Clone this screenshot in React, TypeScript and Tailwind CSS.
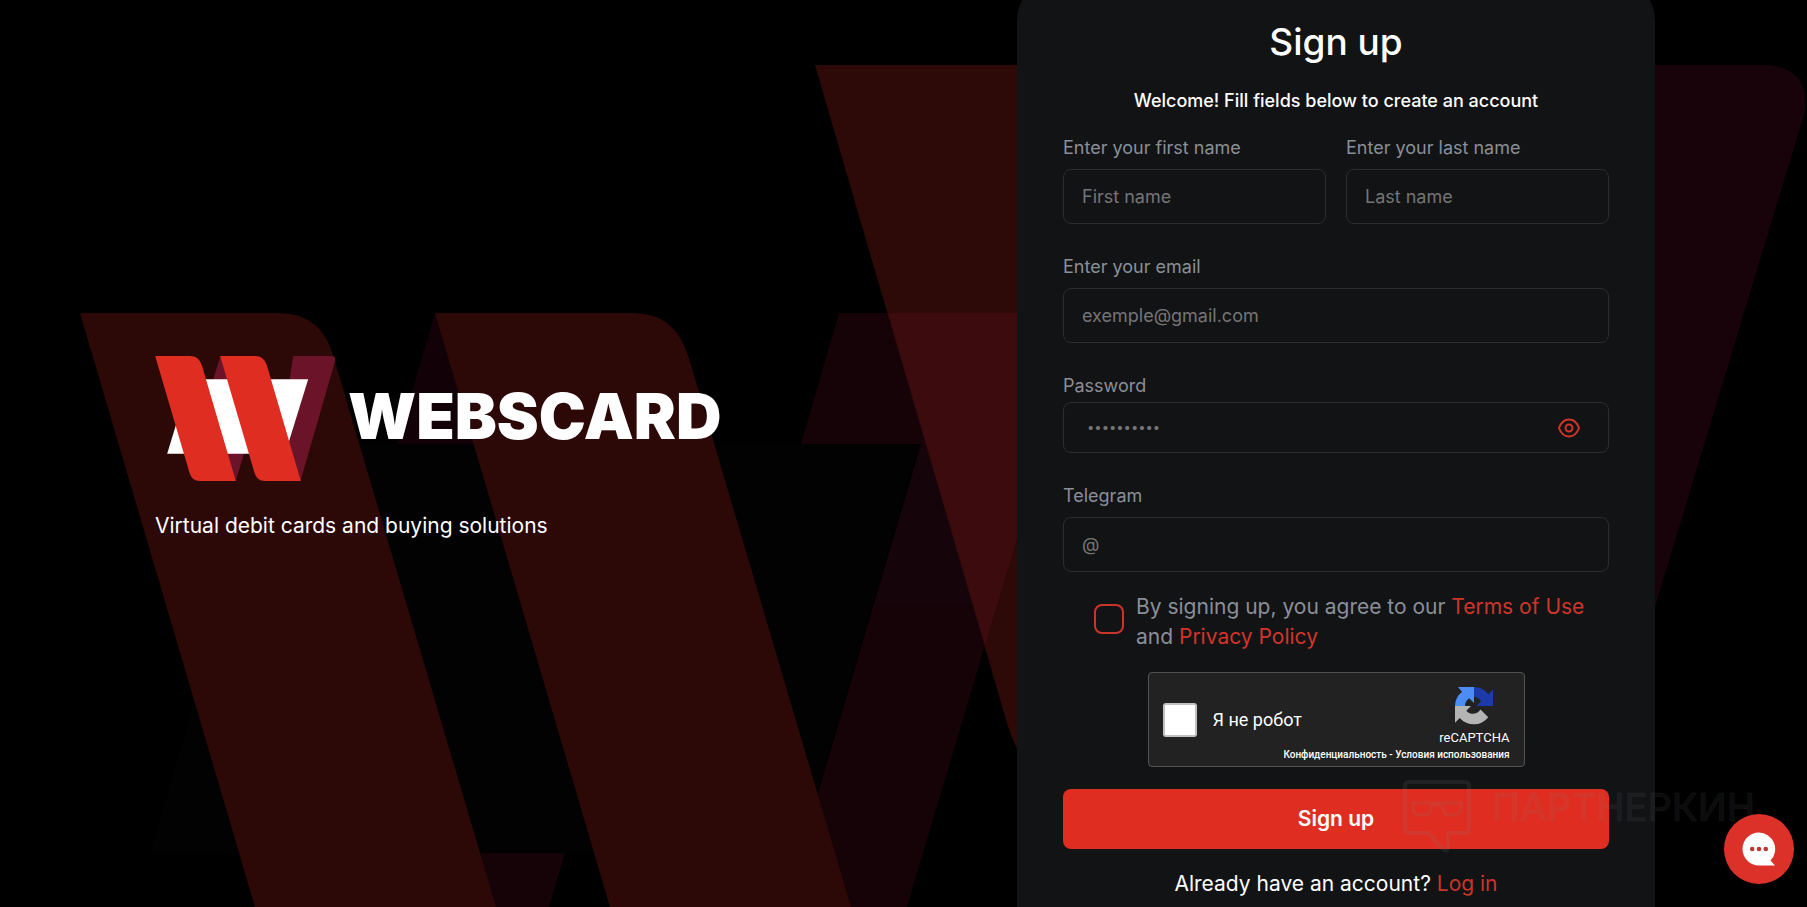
import type { ReactNode } from "react";

const font = "font-['Inter','Noto_Sans',sans-serif]";

function Backdrop() {
  return (
    <svg
      aria-hidden="true"
      className="absolute inset-0 h-full w-full"
      viewBox="0 0 1807 907"
      preserveAspectRatio="xMidYMid slice"
    >
      <path d="M435 313L397 444H480V313Z" fill="#120207" />
      <path d="M839 313H1017V444H801Z" fill="#150308" />
      <path d="M271 444H919L800 853H150Z" fill="#020202" />
      <path d="M470 853H565L549 907H470Z" fill="#150308" />
      <path d="M921 444H1045L907 907H800V853L819 790Z" fill="#150308" />
      <path d="M920 448H1045L997 605H874Z" fill="#15050a" />
      <path d="M1450 65H1763C1795 65 1813 85 1803 118L1655 607L1450 1200Z" fill="#170309" />
      <path d="M80 313H276C307 313 324 326 333 355L496 907H255Z" fill="#2c0907" />
      <path d="M435 313H631C664 313 681 328 691 365L851 907H610Z" fill="#2c0907" />
      <path d="M815 65H1100V800C1040 790 1020 765 1007 723Z" fill="#2d0a08" />
      <path d="M888 313H1050V430L985 645Z" fill="#3c0b0e" />
    </svg>
  );
}

function LogoMark() {
  return (
    <svg aria-hidden="true" className="h-[125px] w-[181px] shrink-0" viewBox="48 48 542 375">
      <path d="M244 48L222 118L265 342L290 422L330 290Z" fill="#6b1328" />
      <path d="M265 341H312L288 423Z" fill="#6b1328" />
      <path d="M462 48H576Q592 48 587 66L484 423L430 260Z" fill="#6b1328" />
      <path d="M152 118H507L438 341H84Z" fill="#fff" />
      <path d="M48 48H153Q179 48 188 76L290 423H182Q158 423 151 398Z" fill="#df2e21" />
      <path d="M243 48H348Q374 48 383 76L485 423H377Q353 423 346 398Z" fill="#df2e21" />
    </svg>
  );
}

function RecaptchaLogo() {
  return (
    <svg aria-hidden="true" className="h-[38px] w-[38px]" viewBox="0 0 64 64">
      <path d="M64 32V4l-8 8A31 31 0 0 0 32 0v17a15 15 0 0 1 12 7l-8 8z" fill="#1c3aa9" />
      <path d="M32 0H5l7 8A31 31 0 0 0 0 32h17a15 15 0 0 1 7-13l8 8z" fill="#4b8df5" />
      <path d="M0 32v28l8-8a31 31 0 0 0 48-1L43 38a15 15 0 0 1-24 2l8-8z" fill="#b4b4b4" />
    </svg>
  );
}

function EyeIcon() {
  return (
    <svg
      aria-hidden="true"
      className="h-6 w-6"
      viewBox="0 0 24 24"
      fill="none"
      stroke="currentColor"
      strokeWidth="2"
    >
      <path d="M2 12C4 6.500 7.800 3.500 12 3.500S20 6.500 22 12C20 17.500 16.200 20.500 12 20.500S4 17.500 2 12Z" />
      <circle cx="12" cy="12" r="3.500" />
    </svg>
  );
}

const fieldClass =
  "block h-[55px] w-full rounded-lg border border-[#2b2d30] bg-transparent px-[18px] text-[18px] text-white outline-none placeholder:text-[#757575] focus:border-[#df2e21]";

function Field({ id, label, children }: { id: string; label: string; children: ReactNode }) {
  return (
    <div className="min-w-0 flex-1">
      <label htmlFor={id} className="block pb-2 text-[18px] leading-[26px] text-[#8a8f98]">
        {label}
      </label>
      {children}
    </div>
  );
}

function Recaptcha() {
  return (
    <div className="mx-auto flex h-[95px] w-[377px] max-w-full justify-between rounded border border-[#525252] bg-[#222] pl-3.5 pr-3.5 font-['Roboto',sans-serif] text-white">
      <label className="flex shrink-0 items-center gap-4 whitespace-nowrap text-[18px]">
        <input
          type="checkbox"
          className="h-[34px] w-[34px] appearance-none rounded-[3px] border-2 border-[#c1c1c1] bg-white checked:bg-[#4b8df5]"
        />
        Я не робот
      </label>
      <div className="flex w-0 flex-col items-end pt-3.5">
        <div className="flex flex-col items-center">
          <RecaptchaLogo />
          <span className="pt-1 text-[13px] leading-[18px]">reCAPTCHA</span>
        </div>
        <p className="whitespace-nowrap text-[10px] font-medium leading-4">
          <a href="#privacy">Конфиденциальность</a> - <a href="#terms">Условия использования</a>
        </p>
      </div>
    </div>
  );
}

function Watermark() {
  return (
    <div
      aria-hidden="true"
      className="pointer-events-none absolute bottom-[54px] right-[52px] flex items-start gap-5"
    >
      <svg
        className="h-[74px] w-[70px]"
        viewBox="0 0 70 74"
        fill="none"
        stroke="#808080"
        strokeOpacity="0.14"
      >
        <path
          strokeWidth="4"
          d="M7 3H63Q67 3 67 7V50Q67 54 63 54H46V69Q44 74 40 69L26 54H7Q3 54 3 50V7Q3 3 7 3Z"
        />
        <path strokeWidth="3" d="M11 24H59V29Q58 36 51 36H47Q41 36 40 26H30Q29 36 23 36H19Q11 36 11 29Z" />
      </svg>
      <span className="pt-2.5 text-[38px] font-medium leading-9 text-[#808080]/10 [-webkit-text-stroke:1px_rgba(128,128,128,0.08)]">
        ПАРТНЕРКИН
      </span>
    </div>
  );
}

export default function App() {
  return (
    <div className={`relative min-h-screen overflow-hidden bg-black text-white ${font}`}>
      <Backdrop />
      <main className="relative flex min-h-screen justify-between gap-10 pl-[155px] pr-[152px]">
        <section className="flex flex-col pt-[356px]">
          <div className="flex items-center gap-3">
            <LogoMark />
            <h1 className="pb-1 text-[63px] font-black leading-none">WEBSCARD</h1>
          </div>
          <p className="pt-[30px] text-[21px] leading-[30px]">Virtual debit cards and buying solutions</p>
        </section>

        <section className="-my-5 w-[638px] shrink-0 rounded-b-lg rounded-t-[40px] bg-[#121315] px-[46px] pb-7 pt-8">
          <h2 className="text-center text-[37px] font-medium leading-[60px]">Sign up</h2>
          <p className="pt-4 text-center text-[18px] font-medium leading-[26px]">
            Welcome! Fill fields below to create an account
          </p>
          <form onSubmit={(e) => e.preventDefault()}>
            <div className="flex gap-5 pt-[21px]">
              <Field id="first" label="Enter your first name">
                <input id="first" type="text" placeholder="First name" className={fieldClass} />
              </Field>
              <Field id="last" label="Enter your last name">
                <input id="last" type="text" placeholder="Last name" className={fieldClass} />
              </Field>
            </div>
            <div className="pt-[30px]">
              <Field id="email" label="Enter your email">
                <input id="email" type="email" placeholder="exemple@gmail.com" className={fieldClass} />
              </Field>
            </div>
            <div className="pt-[30px]">
              <label htmlFor="password" className="block pb-[3px] text-[18px] leading-[26px] text-[#8a8f98]">
                Password
              </label>
              <div className="flex h-[51px] items-center rounded-lg border border-[#2b2d30] pl-[23px] pr-[27px]">
                <input
                  id="password"
                  type="password"
                  placeholder="••••••••••"
                  className="min-w-0 flex-1 bg-transparent text-[13px] text-white outline-none placeholder:text-[#757575]"
                />
                <button type="button" aria-label="Show password" className="text-[#d0352a]">
                  <EyeIcon />
                </button>
              </div>
            </div>
            <div className="pt-[30px]">
              <Field id="telegram" label="Telegram">
                <input id="telegram" type="text" placeholder="@" className={fieldClass} />
              </Field>
            </div>
            <div className="flex items-start gap-3 pb-5 pl-[31px] pt-5">
              <input
                id="agree"
                type="checkbox"
                className="mt-3 h-[30px] w-[30px] shrink-0 appearance-none rounded-lg border-2 border-[#c9352a] checked:bg-[#df2e21]"
              />
              <label htmlFor="agree" className="text-[21px] leading-[30px] text-[#8a8f98]">
                By signing up, you agree to our{" "}
                <a href="#terms" className="text-[#d0352a]">
                  Terms of Use
                </a>
                <br />
                and{" "}
                <a href="#privacy" className="text-[#d0352a]">
                  Privacy Policy
                </a>
              </label>
            </div>
            <Recaptcha />
            <button
              type="submit"
              className="mt-[22px] block h-[60px] w-full rounded-lg bg-[#df2e21] text-[21px] font-semibold"
            >
              Sign up
            </button>
          </form>
          <p className="pt-5 text-center text-[21px] leading-[30px]">
            Already have an account?{" "}
            <a href="#login" className="text-[#c9352a]">
              Log in
            </a>
          </p>
        </section>
      </main>
      <Watermark />
      <button
        type="button"
        aria-label="Open chat"
        className="absolute bottom-[23px] right-[13px] flex h-[70px] w-[70px] items-center justify-center rounded-full bg-[#dc3128]"
      >
        <svg aria-hidden="true" className="h-[34px] w-[34px]" viewBox="0 0 34 34">
          <path d="M17 0.500A16.500 16.500 0 0 1 28.500 28.500L33 33.500H17A16.500 16.500 0 0 1 17 0.500Z" fill="#fff" />
          <circle cx="10.200" cy="17" r="2.300" fill="#b93631" />
          <circle cx="17" cy="17" r="2.300" fill="#b93631" />
          <circle cx="23.800" cy="17" r="2.300" fill="#b93631" />
        </svg>
      </button>
    </div>
  );
}
